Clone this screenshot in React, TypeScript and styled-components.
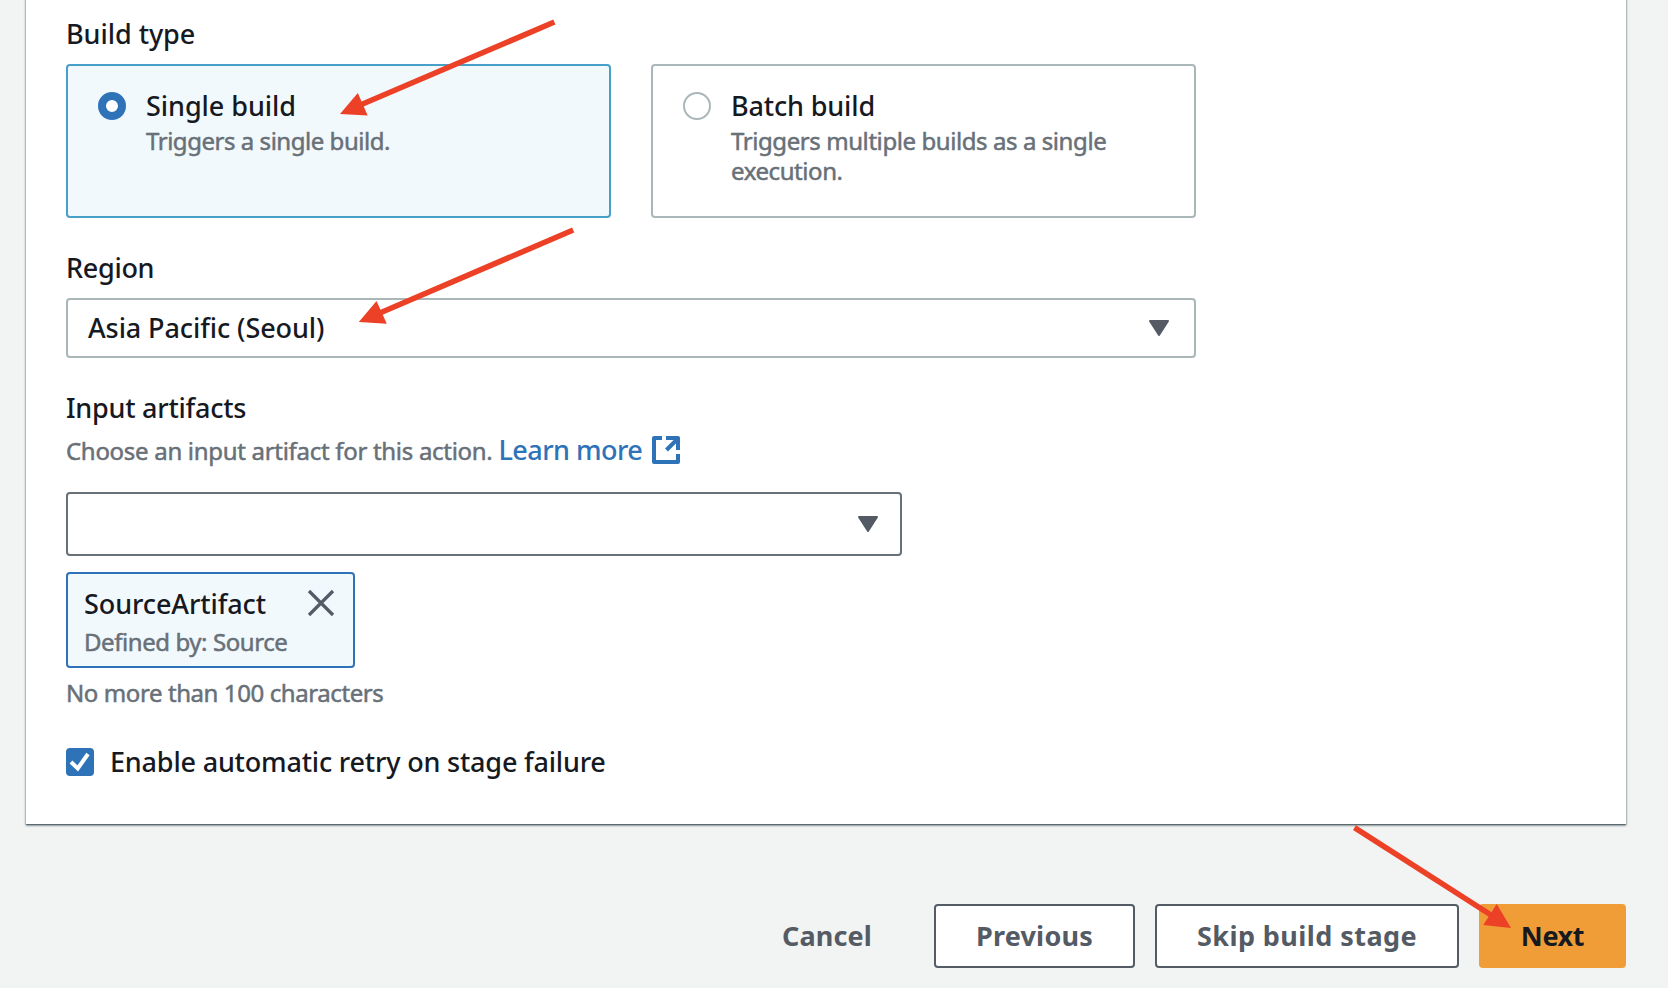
import React from 'react';
import styled, { createGlobalStyle } from 'styled-components';

const color = {
  page: '#f2f3f3',
  ink: '#16191f',
  muted: '#687078',
  slate: '#545b64',
  blue: '#2e73b8',
  tint: '#f2f9fd',
  line: '#aab7b8',
  orange: '#f09d37',
  red: '#ec4126',
};

const GlobalStyle = createGlobalStyle`
  *, *::before, *::after { box-sizing: border-box; }
  body {
    margin: 0;
    background: ${color.page};
    font-family: 'Noto Sans', 'Open Sans', sans-serif;
    color: ${color.ink};
  }
  button { font-family: inherit; }
`;

const Page = styled.div`
  position: relative;
  height: 988px;
  padding: 0 42px 0 26px;
  overflow: hidden;
`;

const Panel = styled.main`
  height: 834px;
  margin-top: -10px;
  padding: 28px 40px 0;
  background: #fff;
  box-shadow: 0 2px 2px 0 rgba(0, 28, 36, 0.26), 0 1px 1px 0 rgba(0, 28, 36, 0.36),
    1px 1px 2px 0 rgba(0, 28, 36, 0.18), -1px 1px 2px 0 rgba(0, 28, 36, 0.18);
`;

const Field = styled.section`
  margin-bottom: 34px;
`;

const Text = styled.div<{ $track?: number }>`
  font-size: 27px;
  font-weight: 500;
  line-height: 32px;
  letter-spacing: ${p => p.$track ?? 0}px;
  white-space: nowrap;
`;

const Label = styled(Text)`
  margin-bottom: 14px;
`;

const Hint = styled.div<{ $track: number }>`
  color: ${color.muted};
  font-size: 24px;
  font-weight: 400;
  line-height: 30px;
  letter-spacing: ${p => p.$track}px;
  -webkit-text-stroke: 0.5px ${color.muted};
`;

const Tiles = styled.div`
  display: grid;
  grid-template-columns: 545px 545px;
  gap: 40px;
`;

const Tile = styled.label<{ $selected?: boolean }>`
  display: flex;
  gap: 20px;
  height: 154px;
  padding: 24px 30px;
  border: 2px solid ${p => (p.$selected ? '#46a0c7' : color.line)};
  border-radius: 4px;
  background: ${p => (p.$selected ? color.tint : '#fff')};
`;

const TileBody = styled.div`
  display: flex;
  flex-direction: column;
  gap: 4px;
  width: 400px;
`;

const Radio = styled.span<{ $selected?: boolean }>`
  flex: none;
  width: 28px;
  height: 28px;
  margin-top: 2px;
  border: ${p => (p.$selected ? `8px solid ${color.blue}` : `2px solid ${color.line}`)};
  border-radius: 50%;
  background: #fff;
`;

const Select = styled.div<{ $width: number; $height: number; $border: string; $end: number }>`
  display: flex;
  align-items: center;
  justify-content: space-between;
  width: ${p => p.$width}px;
  height: ${p => p.$height}px;
  padding: 0 ${p => p.$end}px 0 20px;
  border: 2px solid ${p => p.$border};
  border-radius: 4px;
  background: #fff;
`;

const HintRow = styled.div`
  display: flex;
  align-items: center;
  height: 36px;
  margin: -6px 0 24px;

  & > ${Hint} {
    padding-top: 2px;
  }
`;

const Link = styled.a`
  display: flex;
  align-items: center;
  gap: 10px;
  margin-left: 6px;
  color: ${color.blue};
`;

const Token = styled.div`
  display: flex;
  justify-content: space-between;
  width: 289px;
  height: 96px;
  margin: 16px 0 10px;
  padding: 14px 18px 0 16px;
  border: 2px solid ${color.blue};
  border-radius: 4px;
  background: ${color.tint};
`;

const TokenText = styled.div`
  display: flex;
  flex-direction: column;
  gap: 7px;
  white-space: nowrap;
`;

const Dismiss = styled.button`
  flex: none;
  width: 28px;
  height: 28px;
  margin-top: 1px;
  padding: 0;
  border: 0;
  background: none;
`;

const CheckRow = styled.label`
  display: flex;
  align-items: center;
  gap: 16px;
  height: 32px;
  margin-top: 38px;
`;

const CheckBox = styled.span`
  display: flex;
  width: 28px;
  height: 28px;
  border-radius: 4px;
  background: ${color.blue};
`;

const Footer = styled.footer`
  display: flex;
  justify-content: flex-end;
  gap: 20px;
  margin-top: 80px;
`;

const Button = styled.button<{ $kind: 'link' | 'normal' | 'primary'; $width: number; $track?: number }>`
  width: ${p => p.$width}px;
  height: 64px;
  padding: 0;
  border: 2px solid
    ${p => (p.$kind === 'normal' ? color.slate : p.$kind === 'primary' ? color.orange : 'transparent')};
  border-radius: 4px;
  background: ${p => (p.$kind === 'normal' ? '#fff' : p.$kind === 'primary' ? color.orange : 'transparent')};
  color: ${p => (p.$kind === 'primary' ? color.ink : color.slate)};
  font-size: 27px;
  font-weight: 700;
  line-height: 32px;
  letter-spacing: ${p => p.$track ?? 0}px;
  white-space: nowrap;
`;

const Annotations = styled.svg`
  position: absolute;
  top: 0;
  left: 0;
  pointer-events: none;
`;

const Caret = () => (
  <svg width="20" height="16" viewBox="0 0 20 16" fill={color.slate} stroke={color.slate} strokeWidth="2" strokeLinejoin="round">
    <path d="M1 1H19L10 15Z" />
  </svg>
);

const ExternalIcon = () => (
  <svg width="28" height="28" viewBox="0 0 28 28" fill="none" stroke={color.blue} strokeWidth="4" strokeLinejoin="round">
    <path d="M10 2H2V26H26V18M14 2H26V14" />
    <path d="M14.5 14L26 2.5" />
  </svg>
);

const CloseIcon = () => (
  <svg width="28" height="28" viewBox="0 0 28 28" stroke={color.slate} strokeWidth="3.2">
    <path d="M2 2L26 26M26 2L2 26" />
  </svg>
);

const CheckIcon = () => (
  <svg width="28" height="28" viewBox="0 0 28 28" fill="none" stroke="#fff" strokeWidth="4">
    <path d="M5 14L11.8 20.4L22 6" />
  </svg>
);

const arrows = [
  { shaft: 'M554.4 22L362 104.3', head: '340,114 357.8,93 367.7,115.5' },
  { shaft: 'M573.2 230L381 312.5', head: '358.8,322 376.5,301 386.8,323.7' },
  { shaft: 'M1354.5 827.6L1491 915', head: '1511,928 1496.7,904 1483.3,925' },
];

export default function App() {
  return (
    <>
      <GlobalStyle />
      <Page>
        <Panel>
          <Field>
            <Label $track={-0.05}>Build type</Label>
            <Tiles>
              <Tile $selected>
                <Radio $selected />
                <TileBody>
                  <Text $track={-0.05}>Single build</Text>
                  <Hint $track={-0.46}>Triggers a single build.</Hint>
                </TileBody>
              </Tile>
              <Tile>
                <Radio />
                <TileBody>
                  <Text $track={-0.15}>Batch build</Text>
                  <Hint $track={-0.42}>Triggers multiple builds as a single execution.</Hint>
                </TileBody>
              </Tile>
            </Tiles>
          </Field>
          <Field>
            <Label $track={-0.3}>Region</Label>
            <Select $width={1130} $height={60} $border={color.line} $end={25}>
              <Text $track={-0.09}>Asia Pacific (Seoul)</Text>
              <Caret />
            </Select>
          </Field>
          <Label $track={-0.24}>Input artifacts</Label>
          <HintRow>
            <Hint $track={-0.3}>Choose an input artifact for this action.</Hint>
            <Link>
              <Text $track={-0.54}>Learn more</Text>
              <ExternalIcon />
            </Link>
          </HintRow>
          <Select $width={836} $height={64} $border="#687078" $end={22}>
            <span />
            <Caret />
          </Select>
          <Token>
            <TokenText>
              <Text $track={-0.1}>SourceArtifact</Text>
              <Hint $track={-0.43}>Defined by: Source</Hint>
            </TokenText>
            <Dismiss aria-label="Remove SourceArtifact">
              <CloseIcon />
            </Dismiss>
          </Token>
          <Hint $track={-0.41}>No more than 100 characters</Hint>
          <CheckRow>
            <CheckBox>
              <CheckIcon />
            </CheckBox>
            <Text $track={-0.19}>Enable automatic retry on stage failure</Text>
          </CheckRow>
        </Panel>
        <Footer>
          <Button $kind="link" $width={174} $track={0.12}>Cancel</Button>
          <Button $kind="normal" $width={201} $track={0.2}>Previous</Button>
          <Button $kind="normal" $width={304} $track={0.43}>Skip build stage</Button>
          <Button $kind="primary" $width={147} $track={-0.4}>Next</Button>
        </Footer>
        <Annotations width="1668" height="988" viewBox="0 0 1668 988" fill={color.red}>
          {arrows.map(a => (
            <g key={a.head}>
              <path d={a.shaft} stroke={color.red} strokeWidth="5.6" fill="none" />
              <polygon points={a.head} />
            </g>
          ))}
        </Annotations>
      </Page>
    </>
  );
}
